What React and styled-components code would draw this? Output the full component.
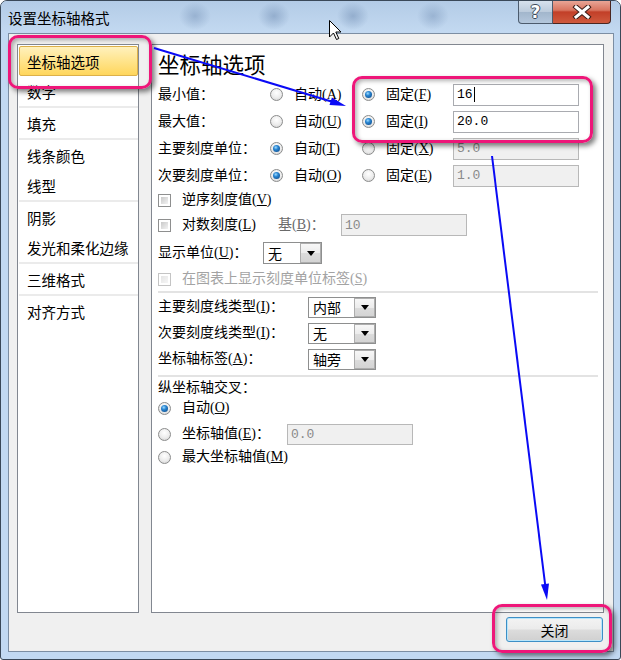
import React from "react";
import styled, { createGlobalStyle, css } from "styled-components";

const FONT = `"Liberation Serif", "Noto Sans CJK SC", serif`;
const MONO = `"Liberation Mono", "Noto Sans CJK SC", monospace`;

const Global = createGlobalStyle`
  html, body { margin: 0; padding: 0; background: #ffffff; }
  body { font-family: ${FONT}; }
  * { box-sizing: border-box; }
`;

const Window = styled.div`
  position: relative;
  width: 621px;
  height: 660px;
  border: 1px solid #3a4858;
  border-radius: 7px 7px 3px 3px;
  overflow: hidden;
  display: flex;
  flex-direction: column;
  background: #c2d9f2;
`;

const TitleBar = styled.div`
  height: 32px;
  flex: none;
  display: flex;
  align-items: flex-start;
  background:
    radial-gradient(ellipse 16px 14px at 194px 15px, rgba(100, 130, 170, 0.4), transparent),
    radial-gradient(ellipse 16px 14px at 273px 15px, rgba(100, 130, 170, 0.45), transparent),
    radial-gradient(ellipse 16px 14px at 352px 15px, rgba(100, 130, 170, 0.45), transparent),
    radial-gradient(ellipse 16px 14px at 432px 15px, rgba(100, 130, 170, 0.38), transparent),
    linear-gradient(180deg, #b3cbe6 0%, #bcd3ec 55%, #c3d9f1 100%);
`;

const Title = styled.div`
  margin: 8px 0 0 7px;
  line-height: 20px;
  font-size: 14.5px;
  color: #000;
  white-space: nowrap;
`;

const Caption = styled.div`
  margin-left: auto;
  margin-right: 9px;
  display: flex;
  height: 23px;
`;

const HelpBtn = styled.div`
  width: 35px;
  height: 100%;
  border: 1px solid #4c5b6d;
  border-top: none;
  border-radius: 0 0 0 4px;
  background: linear-gradient(180deg, #d6e1ed 0%, #bccbdc 48%, #a2b6cc 52%, #b4c7dc 100%);
  display: flex;
  align-items: center;
  justify-content: center;
  font-family: "DejaVu Sans", sans-serif;
  font-weight: bold;
  font-size: 17px;
  color: #fff;
  text-shadow: -1px 0 #3d4a5a, 1px 0 #3d4a5a, 0 -1px #3d4a5a, 0 1px #3d4a5a;
`;

const CloseBtn = styled.div`
  width: 58px;
  height: 100%;
  border: 1px solid #4a2620;
  border-top: none;
  border-left: none;
  border-radius: 0 0 4px 0;
  background: linear-gradient(180deg, #e8a596 0%, #d8745f 42%, #c23f28 50%, #cf5a3e 100%);
  display: flex;
  align-items: center;
  justify-content: center;
`;

const Client = styled.div`
  height: 619px;
  margin: 0 6px 7px 7px;
  border: 1px solid #7c8ea3;
  background: #f0f0f0;
  padding: 10px 9px 0 8px;
  display: flex;
  flex-direction: column;
`;

const Panels = styled.div`
  height: 569px;
  display: flex;
  gap: 12px;
`;

const Nav = styled.div`
  width: 122px;
  border: 1px solid #828790;
  background: #fff;
  padding: 1px 0 0 1px;
  display: flex;
  flex-direction: column;
`;

const NavItem = styled.div`
  height: 30px;
  display: flex;
  align-items: center;
  padding-left: 8px;
  font-size: 14.5px;
  color: #000;
  white-space: nowrap;
  ${(p) =>
    p.$active &&
    css`
      padding-left: 7px;
      border: 1px solid #dcb04a;
      border-radius: 2px;
      background: linear-gradient(180deg, #fff1bd 0%, #ffe48c 50%, #ffd65c 100%);
    `}
`;

const NavSep = styled.div`
  height: 2px;
  background: #ebebeb;
`;

const Content = styled.div`
  width: 453px;
  border: 1px solid #828790;
  background: #fff;
  padding: 7px 0 0 6px;
  display: flex;
  flex-direction: column;
`;

const Heading = styled.div`
  height: 29px;
  line-height: 29px;
  font-size: 21.5px;
  color: #000;
`;

const Row = styled.div`
  height: ${(p) => p.$h}px;
  margin-top: ${(p) => p.$mt || 0}px;
  display: flex;
  align-items: center;
  flex: none;
`;

const Text = styled.span`
  font-size: 14px;
  line-height: 18px;
  color: ${(p) => p.$color || "#000"};
  white-space: nowrap;
  flex: none;
  ${(p) => p.$w && css`width: ${p.$w}px;`}
`;

const U = styled.span`
  text-decoration: underline;
  text-underline-offset: 1px;
`;

const Option = styled.span`
  width: ${(p) => p.$w}px;
  display: flex;
  align-items: center;
  flex: none;
`;

const Radio = styled.span`
  width: 13px;
  height: 13px;
  flex: none;
  margin-right: 11px;
  border-radius: 50%;
  border: 1px solid #8b8c8c;
  background: radial-gradient(circle at 50% 35%, #ffffff 0%, #ececec 55%, #cdcdcd 100%);
  display: flex;
  align-items: center;
  justify-content: center;
  &::after {
    content: "";
    display: ${(p) => (p.$checked ? "block" : "none")};
    width: 7px;
    height: 7px;
    border-radius: 50%;
    background: radial-gradient(circle at 40% 35%, #9fdcff 0%, #2a86d2 35%, #083f7c 100%);
  }
`;

const Check = styled.span`
  width: 13px;
  height: 13px;
  flex: none;
  margin-right: 11px;
  border: 1px solid ${(p) => (p.$disabled ? "#c4c4c4" : "#8e8f8f")};
  padding: 2px;
  background: ${(p) =>
    p.$disabled
      ? "linear-gradient(135deg, #e4e4e4, #f6f6f6) content-box, #fff"
      : "linear-gradient(135deg, #c9c9c9, #f3f3f3) content-box, #fff"};
`;

const Field = styled.span`
  width: ${(p) => p.$w}px;
  height: ${(p) => p.$h}px;
  flex: none;
  display: flex;
  align-items: center;
  padding-left: 3px;
  border: 1px solid ${(p) => (p.$disabled ? "#b8b8b8" : "#a9abb0")};
  background: ${(p) => (p.$disabled ? "#f0f0f0" : "#fff")};
  color: ${(p) => (p.$disabled ? "#8a8a8a" : "#000")};
  font-family: ${MONO};
  font-size: 13px;
`;

const Caret = styled.span`
  width: 1px;
  height: 15px;
  background: #000;
  margin-left: 1px;
`;

const Select = styled.span`
  width: ${(p) => p.$w}px;
  height: ${(p) => p.$h}px;
  flex: none;
  display: flex;
  border: 1px solid #8e8f8f;
  background: #fff;
`;

const SelectText = styled.span`
  flex: 1;
  padding-left: 4px;
  display: flex;
  align-items: center;
  font-size: 14px;
  color: #000;
`;

const DropBtn = styled.span`
  width: 21px;
  flex: none;
  border: 1px solid #adadad;
  background: linear-gradient(180deg, #f7f7f7 0%, #ececec 50%, #dcdcdc 51%, #d4d4d4 100%);
  display: flex;
  align-items: center;
  justify-content: center;
  &::after {
    content: "";
    border-left: 4px solid transparent;
    border-right: 4px solid transparent;
    border-top: 5px solid #000;
  }
`;

const Sep = styled.div`
  height: 2px;
  margin: ${(p) => p.$mt || 0}px 5px 0 0;
  background: #e3e3e3;
  flex: none;
`;

const Footer = styled.div`
  display: flex;
  justify-content: flex-end;
  padding: 4px 1px 0 0;
`;

const Button = styled.button`
  width: 97px;
  height: 25px;
  border: 1px solid #3c8fc6;
  border-radius: 3px;
  box-shadow: inset 0 0 0 1px #b9e6fb;
  background: linear-gradient(180deg, #f3f3f3 0%, #ebebeb 48%, #dcdcdc 52%, #d0d0d0 100%);
  font-family: ${FONT};
  font-size: 14px;
  color: #000;
  padding: 0;
`;

const Overlay = styled.svg`
  position: absolute;
  left: -1px;
  top: -1px;
  width: 621px;
  height: 660px;
  pointer-events: none;
`;

const Mark = styled.div`
  position: absolute;
  left: ${(p) => p.$x - 1}px;
  top: ${(p) => p.$y - 1}px;
  width: ${(p) => p.$w}px;
  height: ${(p) => p.$h}px;
  border: 3px solid #ee1679;
  border-radius: 10px;
  box-shadow: 3px 3px 5px rgba(0, 0, 0, 0.5), inset 2px 2px 4px rgba(0, 0, 0, 0.3);
  pointer-events: none;
`;

const navGroups = [
  ["坐标轴选项", "数字"],
  ["填充"],
  ["线条颜色", "线型"],
  ["阴影", "发光和柔化边缘"],
  ["三维格式"],
  ["对齐方式"],
];

const valueRows = [
  { label: "最小值：", a: "A", f: "F", fixed: true, value: "16", caret: true },
  { label: "最大值：", a: "U", f: "I", fixed: true, value: "20.0" },
  { label: "主要刻度单位：", a: "T", f: "X", fixed: false, value: "5.0" },
  { label: "次要刻度单位：", a: "O", f: "E", fixed: false, value: "1.0" },
];

const selectRows = [
  { label: "主要刻度线类型", k: "I", value: "内部" },
  { label: "次要刻度线类型", k: "I", value: "无" },
  { label: "坐标轴标签", k: "A", value: "轴旁" },
];

function Dropdown({ w, h, value }) {
  return (
    <Select $w={w} $h={h}>
      <SelectText>{value}</SelectText>
      <DropBtn />
    </Select>
  );
}

export default function App() {
  return (
    <>
      <Global />
      <Window>
        <TitleBar>
          <Title>设置坐标轴格式</Title>
          <Caption>
            <HelpBtn>?</HelpBtn>
            <CloseBtn>
              <svg width="20" height="14" viewBox="0 0 20 14">
                <path d="M4 2 L16 12 M16 2 L4 12" stroke="#3b1d18" strokeWidth="5" strokeLinecap="square" />
                <path d="M4 2 L16 12 M16 2 L4 12" stroke="#ffffff" strokeWidth="3" strokeLinecap="square" />
              </svg>
            </CloseBtn>
          </Caption>
        </TitleBar>
        <Client>
          <Panels>
            <Nav>
              {navGroups.map((g, gi) => (
                <React.Fragment key={gi}>
                  {gi > 0 && <NavSep />}
                  {g.map((t) => (
                    <NavItem key={t} $active={t === "坐标轴选项"}>
                      {t}
                    </NavItem>
                  ))}
                </React.Fragment>
              ))}
            </Nav>
            <Content>
              <Heading>坐标轴选项</Heading>
              {valueRows.map((r) => (
                <Row $h={27} key={r.label}>
                  <Text $w={112}>{r.label}</Text>
                  <Option $w={92}>
                    <Radio $checked={!r.fixed} />
                    <Text>
                      自动(<U>{r.a}</U>)
                    </Text>
                  </Option>
                  <Option $w={91}>
                    <Radio $checked={r.fixed} />
                    <Text>
                      固定(<U>{r.f}</U>)
                    </Text>
                  </Option>
                  <Field $w={126} $h={22} $disabled={!r.fixed}>
                    {r.value}
                    {r.caret && <Caret />}
                  </Field>
                </Row>
              ))}
              <Row $h={22}>
                <Check />
                <Text>
                  逆序刻度值(<U>V</U>)
                </Text>
              </Row>
              <Row $h={28}>
                <Check />
                <Text $w={96}>
                  对数刻度(<U>L</U>)
                </Text>
                <Text $w={63} $color="#6a6a6a">
                  基(<U>B</U>)：
                </Text>
                <Field $w={126} $h={22} $disabled>
                  10
                </Field>
              </Row>
              <Row $h={28}>
                <Text $w={105}>
                  显示单位(<U>U</U>)：
                </Text>
                <Dropdown w={59} h={22} value="无" />
              </Row>
              <Row $h={24}>
                <Check $disabled />
                <Text $color="#a3a3a3">
                  在图表上显示刻度单位标签(<U>S</U>)
                </Text>
              </Row>
              <Sep />
              {selectRows.map((r, i) => (
                <Row $h={26} $mt={i === 0 ? 1 : 0} key={r.label}>
                  <Text $w={150}>
                    {r.label}(<U>{r.k}</U>)：
                  </Text>
                  <Dropdown w={68} h={21} value={r.value} />
                </Row>
              ))}
              <Sep $mt={3} />
              <Row $h={22}>
                <Text>纵坐标轴交叉：</Text>
              </Row>
              <Row $h={18}>
                <Radio $checked />
                <Text>
                  自动(<U>O</U>)
                </Text>
              </Row>
              <Row $h={26} $mt={4}>
                <Radio />
                <Text $w={105}>
                  坐标轴值(<U>E</U>)：
                </Text>
                <Field $w={126} $h={21} $disabled>
                  0.0
                </Field>
              </Row>
              <Row $h={20}>
                <Radio />
                <Text>
                  最大坐标轴值(<U>M</U>)
                </Text>
              </Row>
            </Content>
          </Panels>
          <Footer>
            <Button>关闭</Button>
          </Footer>
        </Client>

        <Mark $x={8} $y={35} $w={144} $h={54} />
        <Mark $x={352} $y={76} $w={241} $h={67} />
        <Mark $x={492} $y={604} $w={120} $h={49} />

        <Overlay viewBox="0 0 621 660">
          <line x1="154" y1="48" x2="333" y2="102" stroke="#0a0af5" strokeWidth="2" />
          <polygon points="346,106 329.5,105.1 331.9,97.5" fill="#0a0af5" />
          <line x1="492" y1="156" x2="545.3" y2="586" stroke="#0a0af5" strokeWidth="2" />
          <polygon points="547,600 541,584.6 549,583.6" fill="#0a0af5" />
          <path
            d="M329.5 20.5 L329.5 37 L333.5 33 L336.5 39.5 L338.8 38.5 L335.8 32 L341 32 Z"
            fill="#ffffff"
            stroke="#000000"
            strokeWidth="1"
            strokeLinejoin="round"
          />
        </Overlay>
      </Window>
    </>
  );
}
